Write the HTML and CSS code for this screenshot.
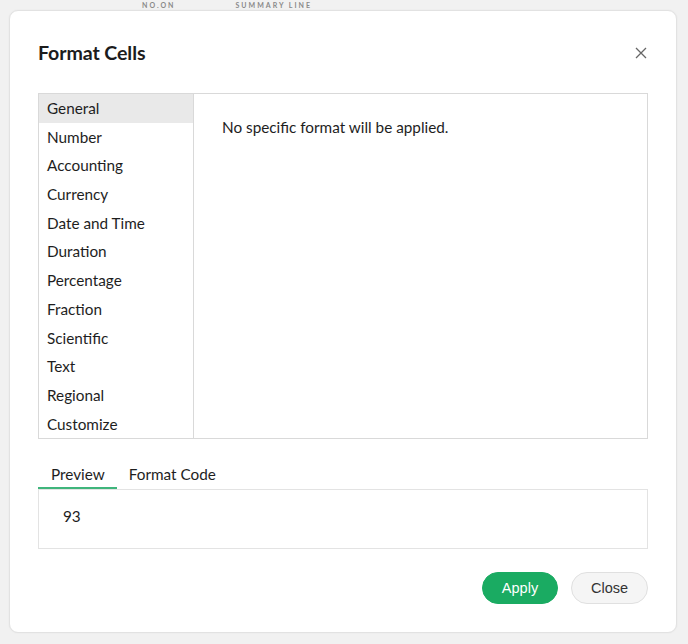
FILE: index.html
```html
<!DOCTYPE html>
<html>
<head>
<meta charset="utf-8">
<link rel="stylesheet" href="styles.css">
</head>
<body>
<div class="page">
  <div class="bg-row"><span class="bg-a">NO.ON</span><span class="bg-b">SUMMARY LINE</span></div>
</div>
<div class="dialog">
  <div class="header">
    <h1 class="title">Format Cells</h1>
    <svg class="close-x" width="12" height="12" viewBox="0 0 12 12"><path d="M1 1 L11 11 M11 1 L1 11" stroke="#666" stroke-width="1.3" fill="none"/></svg>
  </div>
  <div class="panel">
    <ul class="cats">
      <li class="sel">General</li>
      <li>Number</li>
      <li>Accounting</li>
      <li>Currency</li>
      <li>Date and Time</li>
      <li>Duration</li>
      <li>Percentage</li>
      <li>Fraction</li>
      <li>Scientific</li>
      <li>Text</li>
      <li>Regional</li>
      <li>Customize</li>
    </ul>
    <div class="detail">No specific format will be applied.</div>
  </div>
  <div class="tabs">
    <div class="tab active">Preview</div>
    <div class="tab">Format Code</div>
  </div>
  <div class="preview">93</div>
  <div class="actions">
    <button class="btn apply">Apply</button>
    <button class="btn close">Close</button>
  </div>
</div>
</body>
</html>
```
FILE: styles.css
```css
html, body { margin: 0; padding: 0; }
body {
  width: 688px; height: 644px; overflow: hidden;
  background: #f1f1f1;
  font-family: Lato, "Noto Sans", sans-serif;
  color: #222;
  position: relative;
}
.page { height: 644px; }
.bg-row {
  display: flex;
  height: 10px;
  padding-top: 1px;
  font-size: 7px;
  line-height: 8px;
  font-weight: bold;
  color: #8a8a8a;
  letter-spacing: 2px;
}
.bg-a { margin-left: 142px; }
.bg-b { margin-left: 60px; }
.dialog {
  position: absolute;
  left: 9px; top: 10px;
  width: 668px; height: 623px;
  background: #fff;
  border: 1px solid #e2e2e2;
  border-radius: 9px;
  box-sizing: border-box;
  padding: 0 28px 0 28px;
  display: flex; flex-direction: column;
  box-shadow: 0 0 2px rgba(0,0,0,0.06);
}
.header {
  display: flex; align-items: center; justify-content: space-between;
  height: 82px;
}
.title {
  margin: 0;
  font-size: 19.6px; font-weight: 700;
  letter-spacing: -0.1px;
  color: #1c1c1c;
}
.close-x { margin-right: 1px; margin-top: 2px; }
.panel {
  display: flex;
  height: 346px;
  border: 1px solid #d9d9d9;
  box-sizing: border-box;
}
.cats {
  list-style: none; margin: 0; padding: 0;
  width: 155px;
  border-right: 1px solid #d9d9d9;
  box-sizing: border-box;
}
.cats li {
  height: 28.7px;
  line-height: 28.7px;
  padding-left: 8px;
  font-size: 15.3px;
  color: #1e1e1e;
}
.cats li.sel { background: #e9e9e9; }
.detail {
  padding: 24px 0 0 28px;
  font-size: 15.3px;
  color: #1e1e1e;
}
.tabs {
  display: flex;
  margin-top: 23px;
  height: 27px;
}
.tab {
  font-size: 15.3px;
  line-height: 24px;
  color: #1e1e1e;
  padding: 0 12px;
}
.tab.active {
  padding: 0 12px 0 13px;
  border-bottom: 2px solid #3fb57c;
}
.preview {
  height: 60px;
  border: 1px solid #e3e3e3;
  box-sizing: border-box;
  padding: 17px 0 0 24px;
  font-size: 15.3px;
  color: #1e1e1e;
}
.actions {
  display: flex; justify-content: flex-end;
  gap: 13px;
  margin-top: 23px;
}
.btn {
  height: 32px;
  border-radius: 16px;
  font-family: "Liberation Sans", Arial, sans-serif;
  font-size: 14.5px;
  padding: 0;
  cursor: pointer;
}
.apply {
  width: 76px;
  background: #1aab62;
  border: 1px solid #1aab62;
  color: #fff;
}
.close {
  width: 77px;
  background: #f5f5f5;
  border: 1px solid #e0e0e0;
  color: #333;
}
```
